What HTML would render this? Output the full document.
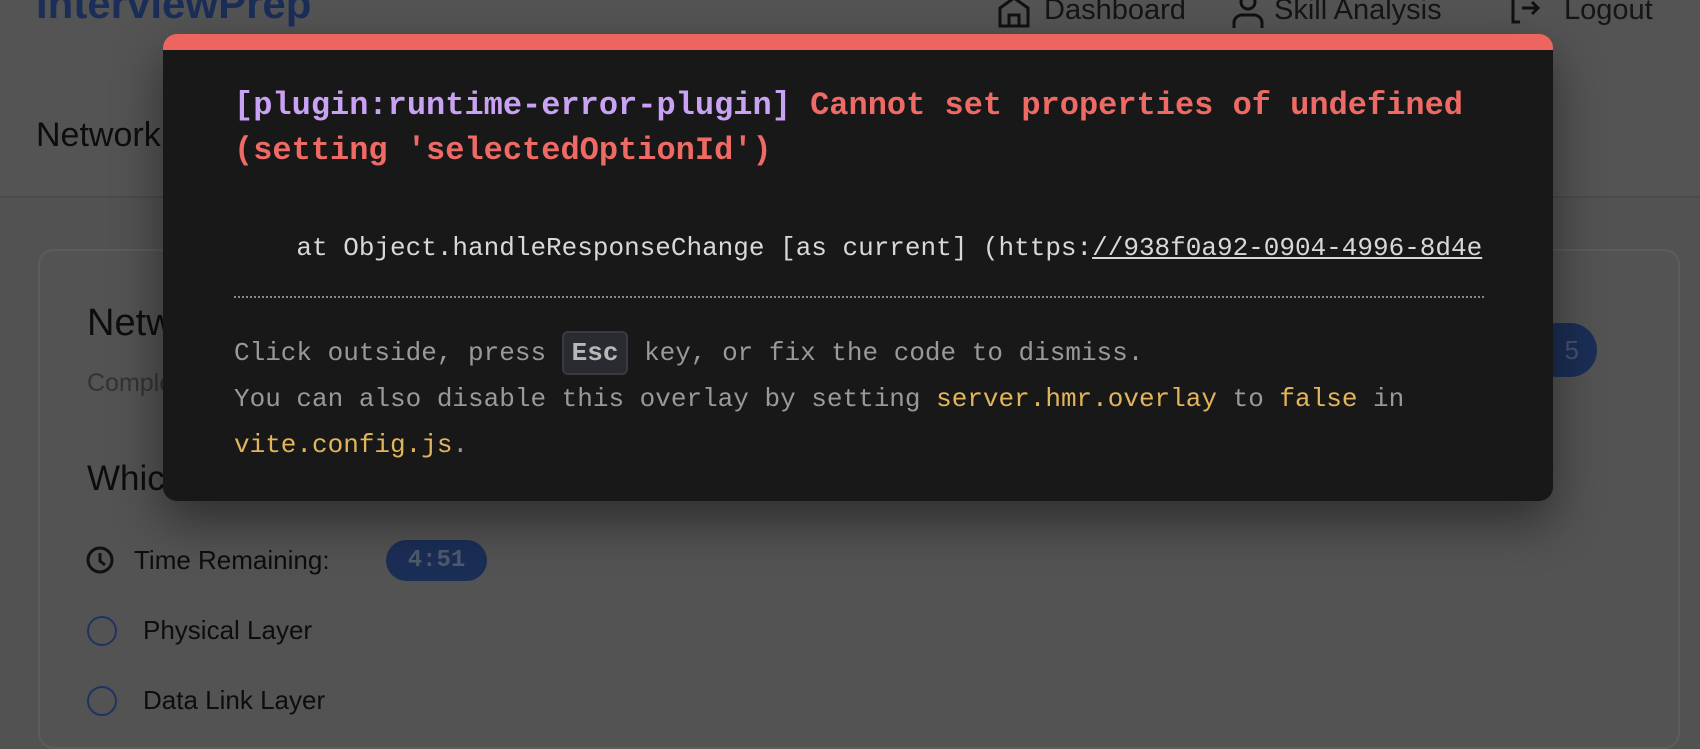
<!DOCTYPE html>
<html><head><meta charset="utf-8"><style>
*{box-sizing:border-box;margin:0;padding:0}
body{width:1700px;height:712px;overflow:hidden;background:#525252;font-family:"Liberation Sans",sans-serif;position:relative}
.hdr{position:absolute;left:0;top:0;width:1700px;height:198px;background:#545454;border-bottom:2px solid #4b4b4b}
.abs{position:absolute;white-space:nowrap}
.card{position:absolute;left:38px;top:249px;width:1642px;height:500px;border:2px solid #5c5c5c;border-radius:16px;background:#535353}
.ov{position:absolute;left:163px;top:34px;width:1390px;height:467px;background:#181818;border-top:16px solid #ec655f;border-radius:14px;box-shadow:0 20px 50px rgba(0,0,0,.45);font-family:"Liberation Mono",monospace}
.m{position:absolute;white-space:pre}
</style></head><body>
<div class="hdr"></div>
<div class="abs" style="left:36px;top:-20px;font-size:42px;font-weight:bold;color:#1b2e58">InterviewPrep</div>
<svg class="abs" style="left:997px;top:-4px" width="34" height="32" viewBox="0 0 34 32"><path d="M3 30V12L17 2l14 10v18zM12 30V19h10v11" fill="none" stroke="#111" stroke-width="3"/></svg>
<div class="abs" style="left:1044px;top:-6px;font-size:29px;color:#151515">Dashboard</div>
<svg class="abs" style="left:1231px;top:-6px" width="34" height="36" viewBox="0 0 34 36"><circle cx="17" cy="8" r="7" fill="none" stroke="#111" stroke-width="3"/><path d="M3 34v-5a8 8 0 0 1 8-8h12a8 8 0 0 1 8 8v5" fill="none" stroke="#111" stroke-width="3"/></svg>
<div class="abs" style="left:1274px;top:-6px;font-size:29px;color:#151515">Skill Analysis</div>
<svg class="abs" style="left:1510px;top:-6px" width="32" height="32" viewBox="0 0 32 32"><path d="M10 2H3v26h7M12 14h16M22 8l6 6-6 6" fill="none" stroke="#111" stroke-width="3"/></svg>
<div class="abs" style="left:1564px;top:-6px;font-size:29px;color:#151515">Logout</div>
<div class="abs" style="left:36px;top:116px;font-size:34px;color:#0d0d0d">Network Fundamentals</div>
<div class="card"></div>
<div class="abs" style="left:87px;top:302px;font-size:38px;color:#0d0d0d">Network Fundamentals</div>
<div class="abs" style="left:87px;top:369px;font-size:25px;color:#333">Complete the questions</div>
<div class="abs" style="left:1530px;top:323px;width:67px;height:54px;border-radius:27px;background:#1b2e56;color:#44536e;font-size:26px;line-height:54px;text-align:right;padding-right:18px">5</div>
<div class="abs" style="left:87px;top:459px;font-size:35px;color:#0d0d0d">Which layer of the OSI model</div>
<svg class="abs" style="left:86px;top:546px" width="28" height="28" viewBox="0 0 28 28"><circle cx="14" cy="14" r="12" fill="none" stroke="#111" stroke-width="3"/><path d="M14 7v8l5 4" fill="none" stroke="#111" stroke-width="3"/></svg>
<div class="abs" style="left:134px;top:545px;font-size:26px;color:#0d0d0d">Time Remaining:</div>
<div class="abs" style="left:386px;top:540px;width:101px;height:41px;border-radius:21px;background:#1b2e56;color:#505a6e;font:bold 24px 'Liberation Mono',monospace;line-height:41px;text-align:center">4:51</div>
<div class="abs" style="left:87px;top:616px;width:30px;height:30px;border-radius:50%;border:2px solid #1f3362"></div>
<div class="abs" style="left:143px;top:615px;font-size:26px;color:#0d0d0d">Physical Layer</div>
<div class="abs" style="left:87px;top:686px;width:30px;height:30px;border-radius:50%;border:2px solid #1f3362"></div>
<div class="abs" style="left:143px;top:685px;font-size:26px;color:#0d0d0d">Data Link Layer</div>
<div class="ov">
<div class="m" style="left:71px;top:33px;font-size:32px;line-height:45px;font-weight:bold;color:#ef6a64"><span style="color:#c9a2f5">[plugin:runtime-error-plugin]</span> Cannot set properties of undefined
(setting 'selectedOptionId')</div>
<div class="m" style="left:71px;top:183px;font-size:26px;color:#d8d8d8">    at Object.handleResponseChange [as current] (https:<span style="text-decoration:underline">//938f0a92-0904-4996-8d4e</span></div>
<div class="abs" style="left:71px;top:246px;width:1250px;border-top:2px dotted #888"></div>
<div class="m" style="left:71px;top:280px;font-size:26px;line-height:46px;color:#999">Click outside, press <span style="display:inline-block;background:#2a2b30;border:2px solid #3a3b40;border-radius:6px;padding:0 8px;line-height:40px;font-weight:bold;color:#b8b8b8">Esc</span> key, or fix the code to dismiss.
You can also disable this overlay by setting <span style="color:#e2b55a">server.hmr.overlay</span> to <span style="color:#e2b55a">false</span> in
<span style="color:#e2b55a">vite.config.js</span>.</div>
</div>
</body></html>
